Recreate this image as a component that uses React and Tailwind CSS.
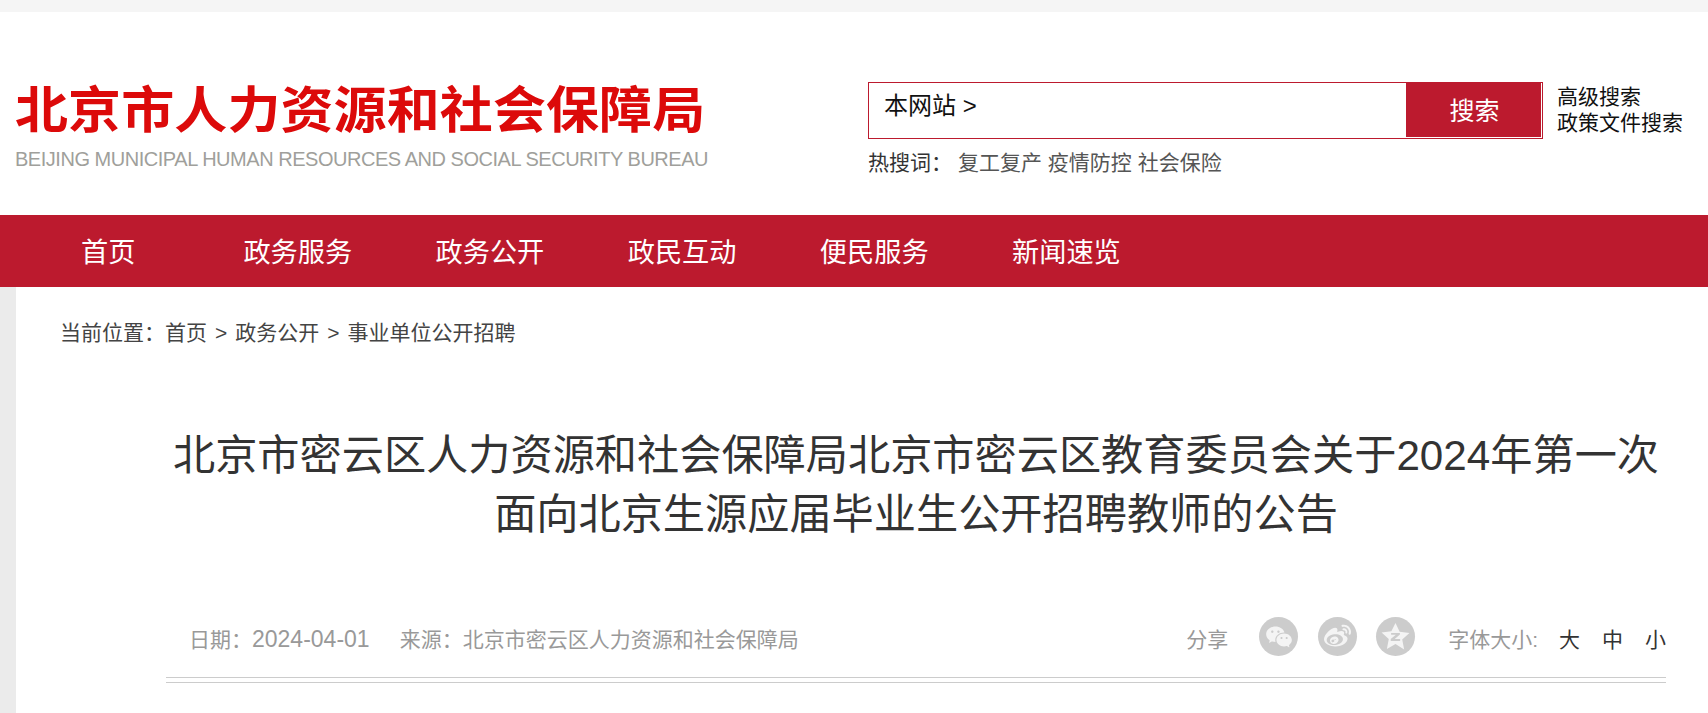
import { RiWechatFill } from 'react-icons/ri'
import { FaWeibo } from 'react-icons/fa'

const FONT = 'font-["Liberation_Sans","Noto_Sans_CJK_SC",sans-serif]'

const NAV = ['政务服务', '政务公开', '政民互动', '便民服务', '新闻速览']

const QzoneIcon = () => (
  <svg viewBox="0 0 24 24" className="w-[31px] h-[31px]">
    <path
      d="M12 1.5l3.2 6.9 7.6.9-5.6 5.1 1.5 7.6L12 17.9l-6.7 3.7 1.5-7.6-5.6-5.1 7.6-.9z"
      fill="#f4f4f4"
    />
    <path d="M8.6 9.2h6.8v1.3l-4 3.4h4.2v1.5H8.3V14l4-3.3H8.6z" fill="#cccccc" />
  </svg>
)

const ShareIcon = ({ children }) => (
  <span className="w-[39px] h-[39px] rounded-full bg-[#cccccc] flex items-center justify-center text-[#f4f4f4]">
    {children}
  </span>
)

const App = () => {
  return (
    <div className={`${FONT} w-full h-[713px] overflow-hidden bg-white flex flex-col`}>
      <div className="h-3 bg-[#f5f5f5]" />

      {/* header */}
      <header className="h-[203px] flex">
        <div className="w-[868px] pl-[15px] pt-[71px]">
          <div className="text-[53px] leading-[50px] font-bold text-[#dc0a0a] tracking-[0.1px] whitespace-nowrap origin-top scale-y-[0.94] font-['Noto_Sans_CJK_SC',sans-serif]">
            北京市人力资源和社会保障局
          </div>
          <div className="mt-[14px] text-[20px] leading-[24px] text-[#a09f9b] tracking-[-0.47px] whitespace-nowrap">
            BEIJING MUNICIPAL HUMAN RESOURCES AND SOCIAL SECURITY BUREAU
          </div>
        </div>
        <div className="pt-[70px]">
          <div className="flex">
            <div className="w-[675px] h-[57px] border border-[#bc1a2e] flex pr-px pb-px">
              <div className="flex-1 pl-[15px] pt-[5px] text-[24px] leading-[36px] text-[#111]">本网站 &gt;</div>
              <button className="w-[135px] bg-[#bc1a2e] text-white text-[25px] leading-[54px] pt-px pl-[2px]">搜索</button>
            </div>
            <div className="ml-[14px] pt-[2px] text-[21px] leading-[26px] text-[#111] whitespace-nowrap">
              <div>高级搜索</div>
              <div>政策文件搜索</div>
            </div>
          </div>
          <div className="mt-[9px] flex text-[21px] leading-[30px] text-[#555] whitespace-nowrap">
            <span className="w-[90px] text-[#333]">热搜词：</span>
            <span>复工复产 疫情防控 社会保险</span>
          </div>
        </div>
      </header>

      {/* nav */}
      <nav className="h-[72px] bg-[#bc1a2e] text-white text-[27.2px] leading-[72px] pt-[2px] flex pl-[81px] whitespace-nowrap">
        <a className="mr-[108px]">首页</a>
        <div className="flex gap-[83.4px]">
          {NAV.map((item) => (
            <a key={item}>{item}</a>
          ))}
        </div>
      </nav>

      <div className="flex-1 flex">
        <div className="w-4 bg-[#ebebeb]" />
        <main className="flex-1 min-w-0">
          <div className="pl-[44px] pt-[31px] text-[21px] leading-[30px] text-[#444] whitespace-nowrap flex">
            <span>当前位置：首页</span>
            <span className="mx-[8px]">&gt;</span>
            <span>政务公开</span>
            <span className="mx-[8px]">&gt;</span>
            <span>事业单位公开招聘</span>
          </div>

          <article className="ml-[150px] w-[1500px]">
            <h1 className="mt-[78px] text-[42.2px] leading-[59px] text-[#333] text-center">
              北京市密云区人力资源和社会保障局北京市密云区教育委员会关于2024年第一次
              <br />
              面向北京生源应届毕业生公开招聘教师的公告
            </h1>

            <div className="mt-[74px] h-[43px] flex items-center justify-between pl-[23px] text-[21px] text-[#999] whitespace-nowrap">
              <div className="flex items-baseline">
                <span>
                  日期：<span className="text-[23px]">2024-04-01</span>
                </span>
                <span className="ml-[30px]">来源：北京市密云区人力资源和社会保障局</span>
              </div>
              <div className="flex items-center">
                <span className="mr-[31px]">分享</span>
                <div className="flex gap-[19.5px] mb-[6px]">
                  <ShareIcon>
                    <RiWechatFill className="w-[28px] h-[28px]" />
                  </ShareIcon>
                  <ShareIcon>
                    <FaWeibo className="w-[27px] h-[27px]" />
                  </ShareIcon>
                  <ShareIcon>
                    <QzoneIcon />
                  </ShareIcon>
                </div>
                <span className="ml-[33px]">字体大小:</span>
                <div className="ml-[21px] flex gap-[22px] text-[#333]">
                  <span>大</span>
                  <span>中</span>
                  <span>小</span>
                </div>
              </div>
            </div>
            <div className="mt-[16px] h-[6px] border-y border-[#cccccc]" />
          </article>
        </main>
      </div>
    </div>
  )
}

export default App
